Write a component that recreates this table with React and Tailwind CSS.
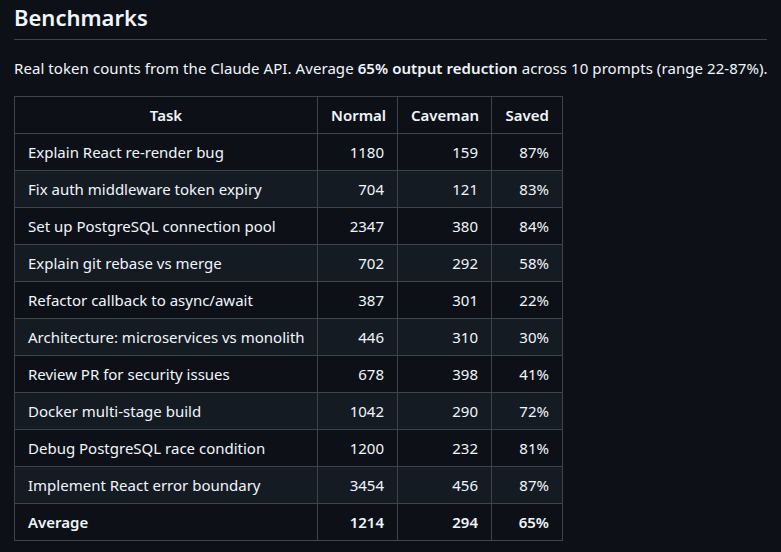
const ROWS = [
  ["Explain React re-render bug", 1180, 159, "87%"],
  ["Fix auth middleware token expiry", 704, 121, "83%"],
  ["Set up PostgreSQL connection pool", 2347, 380, "84%"],
  ["Explain git rebase vs merge", 702, 292, "58%"],
  ["Refactor callback to async/await", 387, 301, "22%"],
  ["Architecture: microservices vs monolith", 446, 310, "30%"],
  ["Review PR for security issues", 678, 398, "41%"],
  ["Docker multi-stage build", 1042, 290, "72%"],
  ["Debug PostgreSQL race condition", 1200, 232, "81%"],
  ["Implement React error boundary", 3454, 456, "87%"],
];

const cell = "border border-[#3d444d] px-[13px] py-[6px] whitespace-nowrap";

export default function App() {
  return (
    <div
      className="min-h-[552px] bg-[#0d1117] text-[#f0f6fc] px-[14px] pt-[2px] text-[15px] leading-[24px]"
      style={{ fontFamily: '"Noto Sans", "Open Sans", sans-serif' }}
    >
      <h2 className="text-[22px] leading-[30px] font-semibold pb-[7px] border-b border-[#3d444d]">
        Benchmarks
      </h2>
      <p className="mt-4 whitespace-nowrap tracking-[0.07px]">
        Real token counts from the Claude API. Average{" "}
        <strong className="font-semibold">65% output reduction</strong> across
        10 prompts (range 22-87%).
      </p>
      <table className="mt-4 border-collapse table-fixed w-[548px]">
        <colgroup>
          <col className="w-[303px]" />
          <col className="w-[80px]" />
          <col className="w-[94px]" />
          <col className="w-[71px]" />
        </colgroup>
        <thead>
          <tr className="bg-[#0d1117]">
            <th className={`${cell} text-center font-semibold`}>Task</th>
            <th className={`${cell} text-right font-semibold`}>Normal</th>
            <th className={`${cell} text-right font-semibold`}>Caveman</th>
            <th className={`${cell} text-right font-semibold`}>Saved</th>
          </tr>
        </thead>
        <tbody>
          {ROWS.map(([task, normal, cave, saved], i) => (
            <tr
              key={task}
              className={i % 2 === 1 ? "bg-[#151b23]" : "bg-[#0d1117]"}
            >
              <td className={cell}>{task}</td>
              <td className={`${cell} text-right`}>{normal}</td>
              <td className={`${cell} text-right`}>{cave}</td>
              <td className={`${cell} text-right`}>{saved}</td>
            </tr>
          ))}
          <tr className="bg-[#0d1117] font-semibold">
            <td className={cell}>Average</td>
            <td className={`${cell} text-right`}>1214</td>
            <td className={`${cell} text-right`}>294</td>
            <td className={`${cell} text-right`}>65%</td>
          </tr>
        </tbody>
      </table>
    </div>
  );
}
